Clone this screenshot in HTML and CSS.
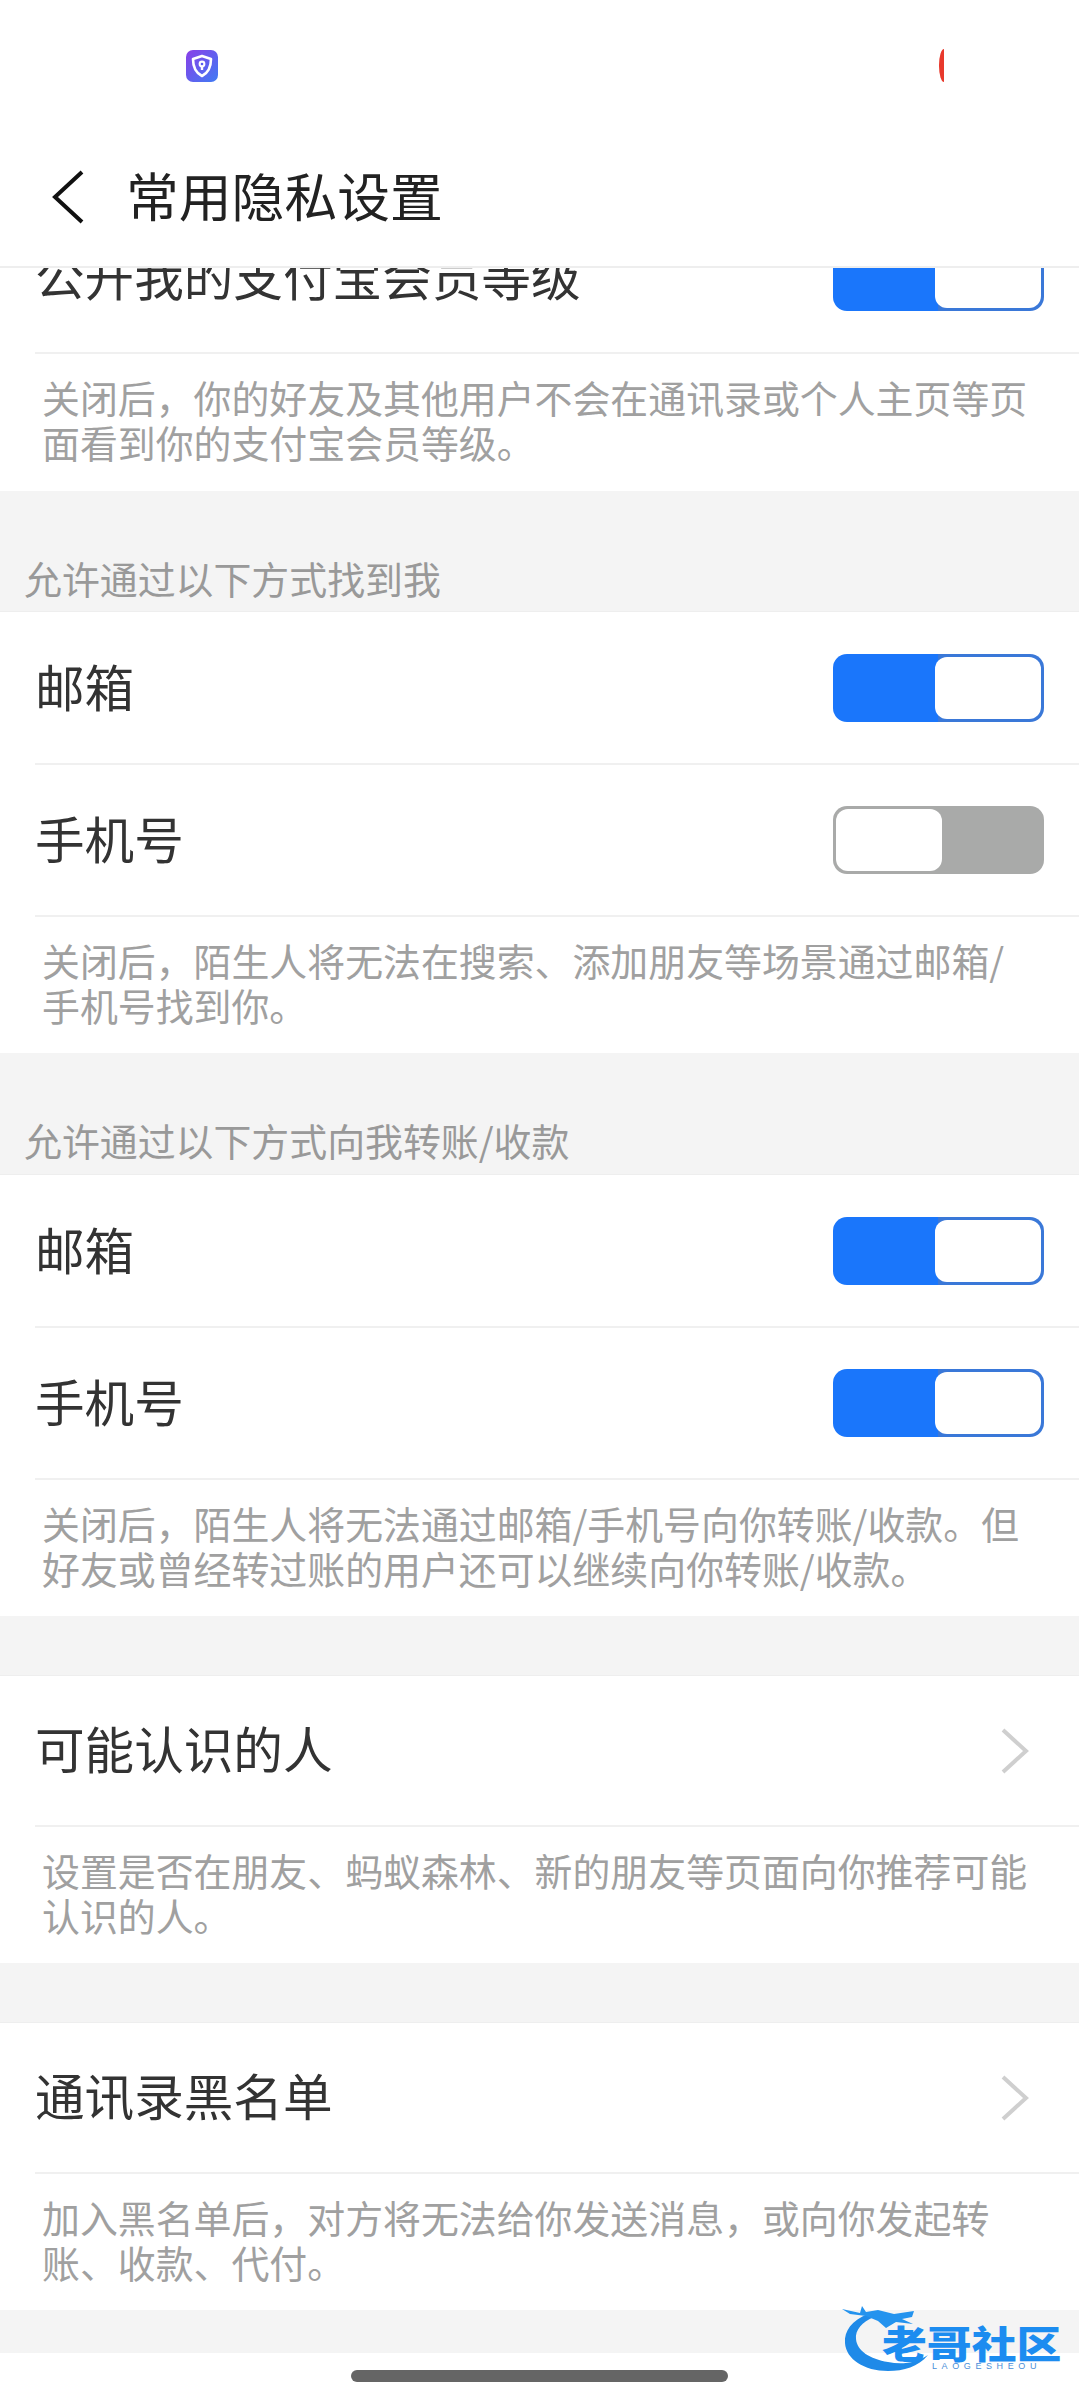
FILE: index.html
```html
<!DOCTYPE html>
<html>
  <head>
    <meta charset="utf-8">
    <link rel="stylesheet" href="styles.css">
  </head>

  <body>
    <div class="status-bar">
      <svg class="app-icon" viewBox="0 0 32 32">
        <defs>
          <linearGradient id="appbg" x1="0" y1="0" x2="1" y2="1">
            <stop offset="0" stop-color="#8a3fe8"/>
            <stop offset="1" stop-color="#3f7cf4"/>
          </linearGradient>
        </defs>
        <rect width="32" height="32" rx="7" fill="url(#appbg)"/>
        <path d="M16 6 L25 9 C25 17 22 23 16 26 C10 23 7 17 7 9 Z" fill="none" stroke="#fff" stroke-width="2.6" stroke-linejoin="round"/>
        <circle cx="16" cy="14" r="3.4" fill="#fff"/>
        <path d="M16 14 L16 20" stroke="#fff" stroke-width="2.4"/>
        <circle cx="16" cy="14" r="1.3" fill="#5a5cf0"/>
      </svg>
      <div class="rec-mark"></div>
    </div>

    <header class="title-bar">
      <svg class="back" viewBox="0 0 32 54">
        <path d="M30 2 L3 27 L30 52" fill="none" stroke="#111" stroke-width="4"/>
      </svg>
      <h1>常用隐私设置</h1>
    </header>

    <main class="content">
      <section class="group group-first">
        <div class="row">
          <span>公开我的支付宝会员等级</span>
          <div class="switch on"><div class="knob"></div></div>
        </div>
        <p class="desc">关闭后，你的好友及其他用户不会在通讯录或个人主页等页<br>面看到你的支付宝会员等级。</p>
      </section>

      <h2 class="group-label">允许通过以下方式找到我</h2>
      <section class="group">
        <div class="row">
          <span>邮箱</span>
          <div class="switch on"><div class="knob"></div></div>
        </div>
        <div class="row">
          <span>手机号</span>
          <div class="switch off"><div class="knob"></div></div>
        </div>
        <p class="desc">关闭后，陌生人将无法在搜索、添加朋友等场景通过邮箱/<br>手机号找到你。</p>
      </section>

      <h2 class="group-label group-label-tall">允许通过以下方式向我转账/收款</h2>
      <section class="group">
        <div class="row">
          <span>邮箱</span>
          <div class="switch on"><div class="knob"></div></div>
        </div>
        <div class="row">
          <span>手机号</span>
          <div class="switch on"><div class="knob"></div></div>
        </div>
        <p class="desc">关闭后，陌生人将无法通过邮箱/手机号向你转账/收款。但<br>好友或曾经转过账的用户还可以继续向你转账/收款。</p>
      </section>

      <div class="spacer"></div>
      <section class="group">
        <div class="row row-link">
          <span>可能认识的人</span>
          <svg class="chevron" viewBox="0 0 28 46"><path d="M2 2 L25 23 L2 44" fill="none" stroke="#cfcfcf" stroke-width="4"/></svg>
        </div>
        <p class="desc">设置是否在朋友、蚂蚁森林、新的朋友等页面向你推荐可能<br>认识的人。</p>
      </section>

      <div class="spacer"></div>
      <section class="group">
        <div class="row row-link">
          <span>通讯录黑名单</span>
          <svg class="chevron" viewBox="0 0 28 46"><path d="M2 2 L25 23 L2 44" fill="none" stroke="#cfcfcf" stroke-width="4"/></svg>
        </div>
        <p class="desc">加入黑名单后，对方将无法给你发送消息，或向你发起转<br>账、收款、代付。</p>
      </section>
      <div class="tail"></div>
    </main>

    <footer class="home-area"><div class="home-bar"></div></footer>

    <div class="watermark">
      <svg class="dragon" viewBox="0 0 100 67">
        <path d="M26 9 C10 15 2 26 3 38 C4 54 22 66 46 66 C62 66 76 62 86 50 C74 58 60 60 46 57 C28 54 15 46 14 34 C13 25 20 17 32 12 Z" fill="#1f8ae8"/>
        <path d="M0 4 L18 8 L20 1 L24 7 L36 5 L52 9 L72 6 L70 12 L60 14 L71 19 L54 17 L44 23 L36 16 L24 11 L8 9 Z" fill="#2493ee"/>
      </svg>
      <div class="mark-text">
        <div class="mark-cn">老哥社区</div>
        <div class="mark-en">LAOGESHEOU</div>
      </div>
    </div>
  </body>
</html>
```

FILE: styles.css
```css
* {
  box-sizing: border-box;
}

html, body {
  margin: 0;
  padding: 0;
}

body {
  width: 1079px;
  height: 2400px;
  overflow: hidden;
  position: relative;
  background: #fff;
  color: #333;
  font-family: "Noto Sans CJK SC", "Noto Sans", sans-serif;
}

.status-bar {
  height: 100px;
  padding: 49px 135px 0 186px;
  display: flex;
  justify-content: space-between;
  align-items: flex-start;
}

.app-icon {
  width: 32px;
  height: 32px;
  margin-top: 1px;
}

.rec-mark {
  width: 5px;
  height: 33px;
  background: #e8392c;
  border-radius: 100% 0 0 100% / 50% 0 0 50%;
}

.title-bar {
  height: 168px;
  padding: 28px 0 0 52px;
  display: flex;
  align-items: center;
  gap: 42px;
  background: #fff;
  border-bottom: 2px solid #eee;
  position: relative;
  z-index: 1;
}

.back {
  width: 32px;
  height: 54px;
}

.title-bar h1 {
  margin: 0 0 6px;
  font-size: 52.8px;
  font-weight: 400;
  line-height: 60px;
  color: #222;
}

.content {
  height: 2085px;
  background: #f4f4f4;
  overflow: hidden;
}

.group {
  padding-top: 1px;
  background: #fff;
  border-top: 1px solid #eee;
}

.group-first {
  margin-top: -68px;
  padding-bottom: 1px;
}

.group-label {
  margin: 0;
  height: 120px;
  padding: 64px 0 0 24px;
  font-size: 37.9px;
  font-weight: 400;
  line-height: 46px;
  color: #999;
  white-space: nowrap;
}

.group-label-tall {
  height: 121px;
}

.row {
  height: 152px;
  margin-left: 35px;
  padding: 0 35px 0 0;
  display: flex;
  justify-content: space-between;
  align-items: center;
  border-bottom: 2px solid #f0f0f0;
  font-size: 49.6px;
  line-height: 60px;
  color: #333;
}

.row span {
  margin-bottom: 6px;
}

.row-link {
  height: 150px;
  padding-right: 50px;
}

.row-link span {
  margin-bottom: 9px;
}

.switch {
  width: 211px;
  height: 68px;
  padding: 3px;
  display: flex;
  border-radius: 14px;
}

.switch.on {
  justify-content: flex-end;
  background: linear-gradient(90deg, #1a76fb 0, #1a76fb 50%, #3a78d8 50%);
}

.switch.off {
  background: #a9aaa9;
}

.knob {
  width: 106px;
  height: 100%;
  background: #fff;
  border-radius: 12px;
}

.chevron {
  width: 28px;
  height: 46px;
}

.desc {
  margin: 0;
  height: 136px;
  padding: 20px 0 0 42px;
  font-size: 37.9px;
  line-height: 45px;
  color: #a0a0a0;
  white-space: nowrap;
}

.spacer {
  height: 59px;
}

.tail {
  height: 43px;
}

.home-area {
  height: 47px;
  padding-top: 17px;
  background: #fff;
}

.home-bar {
  width: 377px;
  height: 12px;
  margin: 0 auto;
  background: #656565;
  border-radius: 6px;
}

.watermark {
  position: absolute;
  left: 842px;
  top: 2305px;
  width: 222px;
  height: 68px;
}

.dragon {
  position: absolute;
  left: 0;
  top: 0;
  width: 100px;
  height: 67px;
}

.mark-text {
  position: absolute;
  left: 40px;
  top: 20px;
  width: 182px;
}

.mark-cn {
  font-size: 38px;
  font-weight: 900;
  line-height: 34px;
  color: #1c8cf0;
  white-space: nowrap;
  transform: scaleX(1.18);
  transform-origin: left center;
}

.mark-en {
  margin: 2px 0 0 50px;
  font-family: "Liberation Sans", sans-serif;
  font-size: 9px;
  line-height: 10px;
  letter-spacing: 4.6px;
  color: #4a8fd8;
  white-space: nowrap;
}
```
